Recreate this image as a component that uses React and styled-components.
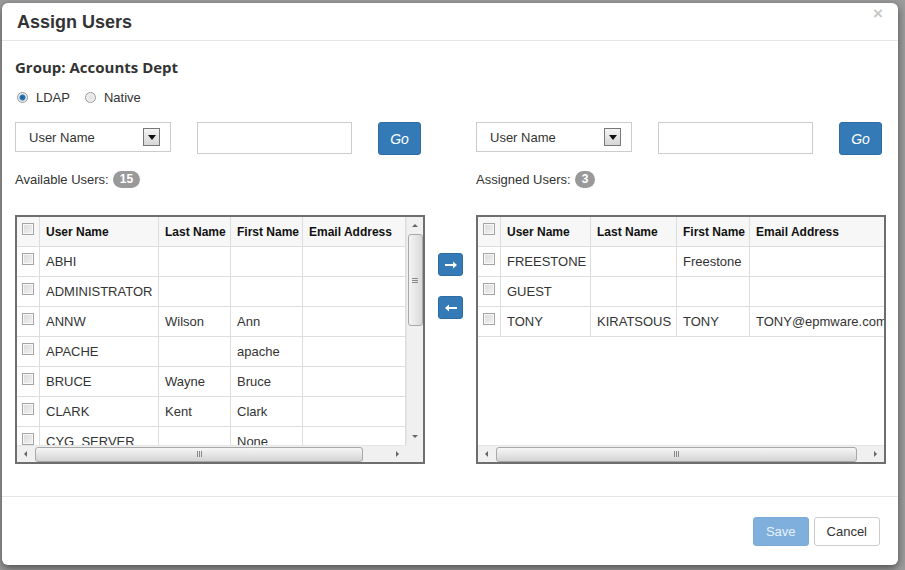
import React from 'react';
import styled, { createGlobalStyle } from 'styled-components';

const GlobalStyle = createGlobalStyle`
  html, body {
    margin: 0;
    padding: 0;
  }
  body {
    background: #9c9c9c;
    font-family: "Liberation Sans", Arial, sans-serif;
    font-size: 13px;
    color: #333;
  }
`;

const Backdrop = styled.div`
  width: 905px;
  height: 570px;
  padding: 3px 0 0 2px;
  box-sizing: border-box;
  overflow: hidden;
`;

const Modal = styled.div`
  width: 896px;
  height: 562px;
  background: #fff;
  border-radius: 6px;
  box-shadow: 0 3px 9px rgba(0, 0, 0, 0.5);
  display: flex;
  flex-direction: column;
  overflow: hidden;
`;

const Header = styled.div`
  height: 38px;
  box-sizing: border-box;
  border-bottom: 1px solid #e5e5e5;
  display: flex;
  align-items: center;
  justify-content: space-between;
  padding: 0 14px 0 15px;
`;

const Title = styled.h4`
  margin: 0;
  font-size: 18px;
  line-height: 20px;
  font-weight: bold;
  color: #333;
`;

const Close = styled.span`
  align-self: flex-start;
  margin-top: 3px;
  margin-right: 1px;
  font-size: 17px;
  line-height: 16px;
  font-weight: bold;
  color: #c8c8c8;
`;

const Body = styled.div`
  height: 455px;
  box-sizing: border-box;
  padding: 16px 12px 0 13px;
`;

const GroupTitle = styled.h5`
  margin: 0;
  font-family: "Open Sans", "Liberation Sans", sans-serif;
  font-size: 15px;
  line-height: 20px;
  font-weight: bold;
  color: #333;
`;

const RadioRow = styled.div`
  margin-top: 11px;
  height: 19px;
  display: flex;
  align-items: center;
  padding-left: 2px;
`;

const RadioLabel = styled.label`
  display: flex;
  align-items: center;
  gap: 8px;
  margin-right: 15px;
  color: #333;
`;

const RadioDot = styled.span`
  width: 11px;
  height: 11px;
  border-radius: 50%;
  box-sizing: border-box;
  border: 1px solid #9a9a9a;
  background: ${(p) =>
    p.checked
      ? 'radial-gradient(circle, #1d5f96 0, #2a78b5 2.5px, #e8e8e8 3.5px, #f6f6f6 100%)'
      : 'radial-gradient(circle, #e2e2e2 0, #f5f5f5 100%)'};
`;

const Panels = styled.div`
  margin-top: 15px;
  display: grid;
  grid-template-columns: 410px 51px 410px;
`;

const Panel = styled.div`
  display: flex;
  flex-direction: column;
`;

const FilterRow = styled.div`
  height: 33px;
  display: flex;
  align-items: flex-start;
  gap: 26px;
`;

const Select = styled.div`
  width: 156px;
  height: 30px;
  box-sizing: border-box;
  border: 1px solid #ccc;
  display: flex;
  align-items: center;
  justify-content: space-between;
  padding: 0 10px 0 13px;
  color: #333;
`;

const DropSquare = styled.span`
  width: 17px;
  height: 18px;
  box-sizing: border-box;
  border: 1px solid #777;
  background: linear-gradient(#f4f4f4, #d6d6d6);
  display: flex;
  align-items: center;
  justify-content: center;
  &::after {
    content: '';
    border-left: 4px solid transparent;
    border-right: 4px solid transparent;
    border-top: 5px solid #111;
    margin-top: 1px;
  }
`;

const TextInput = styled.div`
  width: 155px;
  height: 32px;
  box-sizing: border-box;
  border: 1px solid #ccc;
`;

const GoButton = styled.button`
  width: 43px;
  height: 33px;
  box-sizing: border-box;
  background: #337ab7;
  border: 1px solid #2e6da4;
  border-radius: 3px;
  color: #fff;
  font-family: "Liberation Sans", Arial, sans-serif;
  font-size: 14px;
  font-style: italic;
  padding: 0;
`;

const LabelRow = styled.div`
  margin-top: 15px;
  height: 18px;
  display: flex;
  align-items: center;
  gap: 4px;
  color: #333;
`;

const Badge = styled.span`
  height: 17px;
  padding: 0 7px;
  border-radius: 9px;
  background: #999;
  color: #fff;
  font-size: 12px;
  font-weight: bold;
  display: inline-flex;
  align-items: center;
  justify-content: center;
`;

const Middle = styled.div`
  padding-top: 131px;
  display: flex;
  flex-direction: column;
  align-items: center;
  gap: 20px;
`;

const MoveButton = styled.button`
  width: 25px;
  height: 23px;
  padding: 0;
  background: #337ab7;
  border: 1px solid #2e6da4;
  border-radius: 3px;
  display: flex;
  align-items: center;
  justify-content: center;
`;

const TableBox = styled.div`
  margin-top: 27px;
  width: 410px;
  height: 249px;
  box-sizing: border-box;
  border: 2px solid #6e6e6e;
  display: grid;
  grid-template-columns: ${(p) => (p.$vscroll ? '1fr 17px' : '1fr')};
  grid-template-rows: 1fr 17px;
  overflow: hidden;
`;

const Viewport = styled.div`
  overflow: hidden;
  min-width: 0;
`;

const Row = styled.div`
  display: grid;
  grid-template-columns: ${(p) => p.$cols};
  height: 30px;
  box-sizing: border-box;
  border-bottom: 1px solid #ddd;
  background: ${(p) => (p.$head ? '#f7f7f7' : '#fff')};
`;

const Cell = styled.div`
  border-right: 1px solid #ddd;
  padding: 0 6px;
  display: flex;
  align-items: center;
  white-space: nowrap;
  overflow: hidden;
  font-size: ${(p) => (p.$head ? '12px' : '13px')};
  font-weight: ${(p) => (p.$head ? 'bold' : 'normal')};
  color: ${(p) => (p.$head ? '#111' : '#333')};
`;

const CheckCell = styled.div`
  border-right: 1px solid #ddd;
  display: flex;
  justify-content: center;
  padding-top: 6px;
`;

const Check = styled.span`
  width: 12px;
  height: 12px;
  box-sizing: border-box;
  border: 1px solid #a4a4a4;
  background: linear-gradient(135deg, #d9d9d9, #f3f3f3);
  box-shadow: inset 0 0 0 1px #f8f8f8;
`;

const HScroll = styled.div`
  grid-column: 1;
  display: flex;
  align-items: center;
  background: #f0f0f0;
  border-top: 1px solid #e6e6e6;
`;

const VScroll = styled.div`
  grid-column: 2;
  grid-row: 1;
  display: flex;
  flex-direction: column;
  align-items: center;
  background: #f0f0f0;
  border-left: 1px solid #e6e6e6;
`;

const Corner = styled.div`
  background: #f0f0f0;
`;

const ScrollArrow = styled.span`
  flex: 0 0 17px;
  width: 17px;
  height: 17px;
  display: flex;
  align-items: center;
  justify-content: center;
  &::after {
    content: '';
    border: 3px solid transparent;
    ${(p) => p.$dir === 'left' && 'border-right: 3px solid #666; margin-right: 3px;'}
    ${(p) => p.$dir === 'right' && 'border-left: 3px solid #666; margin-left: 3px;'}
    ${(p) => p.$dir === 'up' && 'border-bottom: 3px solid #666; margin-bottom: 3px;'}
    ${(p) => p.$dir === 'down' && 'border-top: 3px solid #666; margin-top: 3px;'}
  }
`;

const Rail = styled.div`
  flex: 1;
  display: flex;
  flex-direction: ${(p) => (p.$vertical ? 'column' : 'row')};
  align-self: stretch;
  align-items: center;
`;

const Thumb = styled.div`
  box-sizing: border-box;
  border: 1px solid #a8a8a8;
  border-radius: 3px;
  display: flex;
  align-items: center;
  justify-content: center;
  ${(p) =>
    p.$vertical
      ? `width: 15px; background: linear-gradient(90deg, #f4f4f4, #dadada);`
      : `height: 15px; margin-left: 1px; background: linear-gradient(#f6f6f6, #d4d4d4);`}
`;

const Grip = styled.span`
  ${(p) =>
    p.$vertical
      ? `width: 6px; height: 5px; background: repeating-linear-gradient(#888 0 1px, transparent 1px 2px);`
      : `width: 5px; height: 6px; background: repeating-linear-gradient(90deg, #888 0 1px, transparent 1px 2px);`}
`;

const Footer = styled.div`
  flex: 1;
  border-top: 1px solid #e5e5e5;
  display: flex;
  align-items: center;
  justify-content: flex-end;
  gap: 5px;
  padding-right: 18px;
`;

const FooterButton = styled.button`
  height: 29px;
  padding: 0 12px;
  border-radius: 3px;
  font-family: "Liberation Sans", Arial, sans-serif;
  font-size: 13px;
  border: 1px solid ${(p) => (p.$primary ? '#7aabd8' : '#ccc')};
  background: ${(p) => (p.$primary ? '#7eafdd' : '#fff')};
  color: ${(p) => (p.$primary ? '#e8f1fa' : '#333')};
`;

const Arrow = ({ dir }) => (
  <svg width="14" height="8" viewBox="0 0 14 8">
    {dir === 'right' ? (
      <>
        <rect x="1" y="3" width="9" height="2" fill="#fff" />
        <polygon points="9,0.5 13,4 9,7.5" fill="#fff" />
      </>
    ) : (
      <>
        <rect x="4" y="3" width="9" height="2" fill="#fff" />
        <polygon points="5,0.5 1,4 5,7.5" fill="#fff" />
      </>
    )}
  </svg>
);

const availableUsers = [
  ['ABHI', '', ''],
  ['ADMINISTRATOR', '', ''],
  ['ANNW', 'Wilson', 'Ann'],
  ['APACHE', '', 'apache'],
  ['BRUCE', 'Wayne', 'Bruce'],
  ['CLARK', 'Kent', 'Clark'],
  ['CYG_SERVER', '', 'None'],
];

const assignedUsers = [
  ['FREESTONE', '', 'Freestone'],
  ['GUEST', '', ''],
  ['TONY', 'KIRATSOUS', 'TONY', 'TONY@epmware.com'],
];

function UserTable({ rows, cols, vscroll, thumb }) {
  return (
    <TableBox $vscroll={vscroll}>
      <Viewport>
        <Row $head $cols={cols}>
          <CheckCell>
            <Check />
          </CheckCell>
          <Cell $head>User Name</Cell>
          <Cell $head>Last Name</Cell>
          <Cell $head>First Name</Cell>
          <Cell $head>Email Address</Cell>
        </Row>
        {rows.map((r) => (
          <Row key={r[0]} $cols={cols}>
            <CheckCell>
              <Check />
            </CheckCell>
            <Cell>{r[0]}</Cell>
            <Cell>{r[1]}</Cell>
            <Cell>{r[2]}</Cell>
            <Cell>{r[3] || ''}</Cell>
          </Row>
        ))}
      </Viewport>
      {vscroll && (
        <VScroll>
          <ScrollArrow $dir="up" />
          <Rail $vertical>
            <Thumb $vertical style={{ height: 92 }}>
              <Grip $vertical />
            </Thumb>
          </Rail>
          <ScrollArrow $dir="down" />
        </VScroll>
      )}
      <HScroll>
        <ScrollArrow $dir="left" />
        <Rail>
          <Thumb style={{ width: thumb }}>
            <Grip />
          </Thumb>
        </Rail>
        <ScrollArrow $dir="right" />
      </HScroll>
      {vscroll && <Corner />}
    </TableBox>
  );
}

function Filter() {
  return (
    <FilterRow>
      <Select>
        User Name
        <DropSquare />
      </Select>
      <TextInput />
      <GoButton>Go</GoButton>
    </FilterRow>
  );
}

export default function App() {
  return (
    <>
      <GlobalStyle />
      <Backdrop>
        <Modal>
          <Header>
            <Title>Assign Users</Title>
            <Close>×</Close>
          </Header>
          <Body>
            <GroupTitle>Group: Accounts Dept</GroupTitle>
            <RadioRow>
              <RadioLabel>
                <RadioDot checked />
                LDAP
              </RadioLabel>
              <RadioLabel>
                <RadioDot />
                Native
              </RadioLabel>
            </RadioRow>
            <Panels>
              <Panel>
                <Filter />
                <LabelRow>
                  Available Users: <Badge>15</Badge>
                </LabelRow>
                <UserTable
                  rows={availableUsers}
                  cols="23px 119px 72px 72px 103px"
                  vscroll
                  thumb={328}
                />
              </Panel>
              <Middle>
                <MoveButton>
                  <Arrow dir="right" />
                </MoveButton>
                <MoveButton>
                  <Arrow dir="left" />
                </MoveButton>
              </Middle>
              <Panel>
                <Filter />
                <LabelRow>
                  Assigned Users: <Badge>3</Badge>
                </LabelRow>
                <UserTable
                  rows={assignedUsers}
                  cols="23px 90px 86px 73px 150px"
                  thumb={361}
                />
              </Panel>
            </Panels>
          </Body>
          <Footer>
            <FooterButton $primary>Save</FooterButton>
            <FooterButton>Cancel</FooterButton>
          </Footer>
        </Modal>
      </Backdrop>
    </>
  );
}
